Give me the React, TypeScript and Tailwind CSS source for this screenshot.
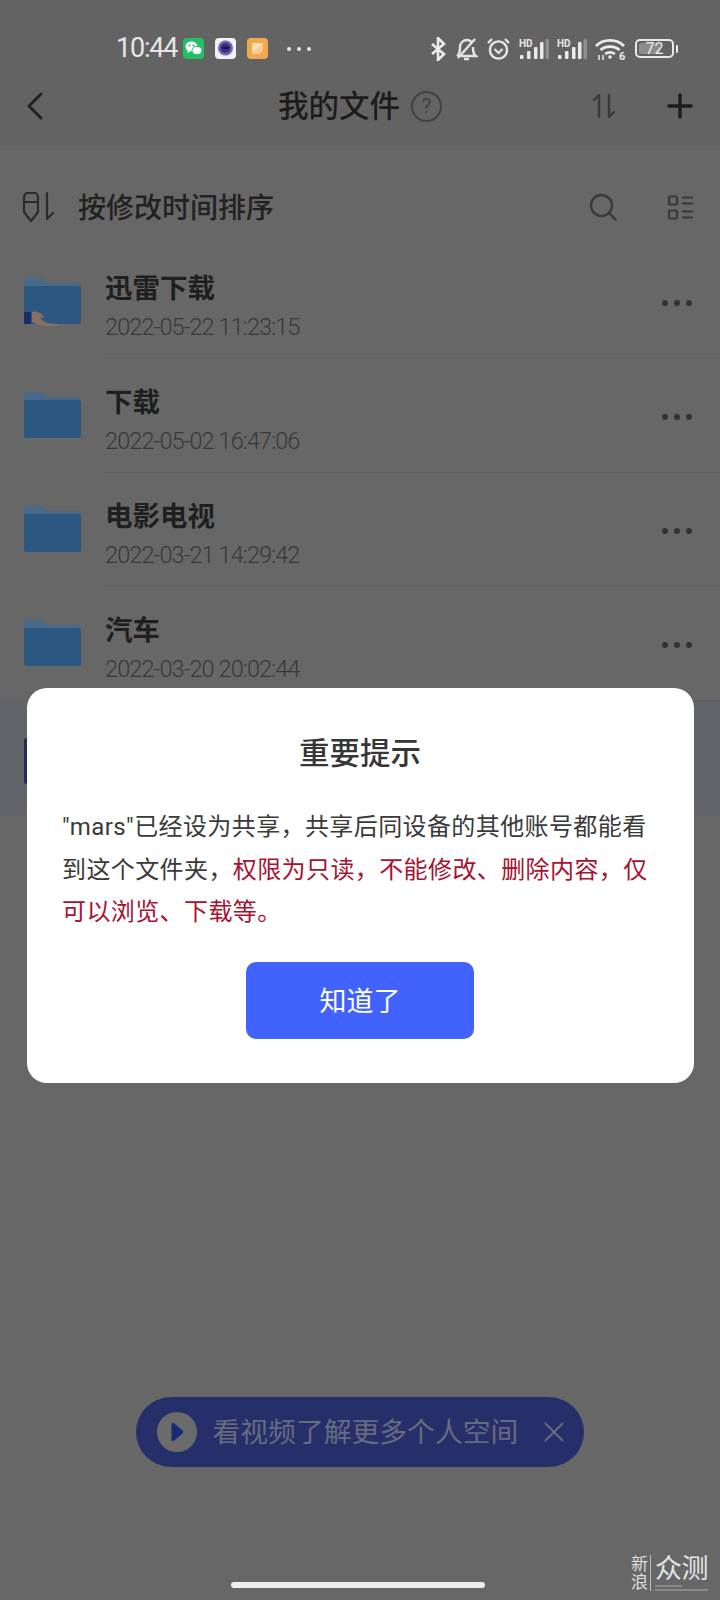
import React from "react";

const Folder = ({ hand = false, navy = false }: { hand?: boolean; navy?: boolean }) => (
  <svg width="57" height="48" viewBox="0 0 57 48" className="shrink-0 overflow-visible">
    <path d="M0 4a3 3 0 0 1 3-3h14a3 3 0 0 1 3 2l2 3h32a3 3 0 0 1 3 3v6H0z" fill={navy ? "#1f2f5c" : "#49698a"} />
    <path d="M0 9h54a3 3 0 0 1 3 3v33a2 2 0 0 1-2 2H2a2 2 0 0 1-2-2z" fill={navy ? "#1f2f5c" : "#2c5780"} />
    {hand && (
      <g>
        <rect x="0" y="35" width="7" height="12" fill="#1b2c66" />
        <path d="M8 35c4-1 7 0 9 2l3 3c-2 1-3 1-4 0 1 3 4 5 8 6 3 .5 8 1 12 2-6 1.500-14 1.500-20 0-3-1-6-2-8-3z" fill="#8a6f5e" />
      </g>
    )}
  </svg>
);

const Dots = () => (
  <div className="flex gap-[6px] shrink-0">
    <span className="w-[6px] h-[6px] rounded-full bg-[#333333]" />
    <span className="w-[6px] h-[6px] rounded-full bg-[#333333]" />
    <span className="w-[6px] h-[6px] rounded-full bg-[#333333]" />
  </div>
);

const Row = ({ name, date, hand }: { name: string; date: string; hand?: boolean }) => (
  <div className="flex h-[114px] pl-[24px]">
    <div className="pt-[32px] w-[81px] shrink-0">
      <Folder hand={hand} />
    </div>
    <div className="flex-1 flex justify-between border-b border-[#606060] pr-[28px]">
      <div className="pt-[26px]">
        <div className="text-[27.5px] leading-[36px] font-bold text-[#1f1f1f]">{name}</div>
        <div className="mt-[5px] text-[23.5px] leading-[30px] font-light tracking-[-0.9px] text-[#383838]">{date}</div>
      </div>
      <div className="pt-[55px]">
        <Dots />
      </div>
    </div>
  </div>
);

const Signal = () => (
  <svg width="30" height="22" viewBox="0 0 30 22">
    <text x="0" y="8.5" fontSize="10" fontWeight="700" fill="#e8e8e8" fontFamily="Roboto">HD</text>
    <rect x="1" y="17" width="3.5" height="4" rx="1" fill="#eaeaea" />
    <rect x="8" y="13" width="3.5" height="8" rx="1" fill="#eaeaea" />
    <rect x="15" y="9" width="3.5" height="12" rx="1" fill="#eaeaea" />
    <rect x="21" y="4" width="3.5" height="17" rx="1" fill="#eaeaea" />
    <rect x="26.5" y="1" width="3.5" height="20" rx="1" fill="#8e8e8e" />
  </svg>
);

export default function App() {
  return (
    <div className="relative w-[720px] h-[1600px] overflow-hidden bg-[#676767] font-['Roboto','Noto_Sans_CJK_SC',sans-serif]">
      <header className="h-[145px] bg-[#636363] pt-[36px]">
        <div className="flex items-center h-[25px] pl-[116px] pr-[42px]">
          <span className="w-[61px] text-[27px] leading-[25px] tracking-[-1.2px] text-[#e6e6e6] whitespace-nowrap">10:44</span>
          <svg width="21" height="21" viewBox="0 0 21 21" className="ml-[6px]">
            <rect width="21" height="21" rx="4" fill="#22bf66" />
            <ellipse cx="8.5" cy="8.5" rx="6" ry="5" fill="#fff" />
            <path d="M5 12l-1 3 3-1.5z" fill="#fff" />
            <ellipse cx="14" cy="12.5" rx="5" ry="4.2" fill="#fff" stroke="#22bf66" strokeWidth="1" />
            <circle cx="6.5" cy="7.5" r="1" fill="#22bf66" />
            <circle cx="10.5" cy="7.5" r="1" fill="#22bf66" />
          </svg>
          <svg width="21" height="21" viewBox="0 0 21 21" className="ml-[11px]">
            <rect width="21" height="21" rx="4" fill="#f1f0f5" />
            <circle cx="10.5" cy="10" r="7.5" fill="#6f62b2" />
            <circle cx="10.5" cy="10" r="5" fill="#3e2f86" />
            <path d="M6 10c2-2 6-2 9-1-1 2-5 3-9 1z" fill="#1b1b3a" />
          </svg>
          <svg width="21" height="21" viewBox="0 0 21 21" className="ml-[11px]">
            <rect width="21" height="21" rx="4" fill="#f0a94e" />
            <path d="M5 5h11v7l-4 4H5z" fill="#fbdcae" />
            <path d="M16 5v7l-4 4H5z" fill="#f6c98c" />
          </svg>
          <div className="flex gap-[6px] ml-[19px]">
            <span className="w-[4px] h-[4px] rounded-full bg-[#e6e6e6]" />
            <span className="w-[4px] h-[4px] rounded-full bg-[#e6e6e6]" />
            <span className="w-[4px] h-[4px] rounded-full bg-[#e6e6e6]" />
          </div>
          <div className="ml-auto flex items-center gap-2">
            <svg width="17" height="24" viewBox="0 0 17 24" fill="none" stroke="#ececec" strokeWidth="2.6">
              <path d="M2 7l12 10-6 6V1l6 6L2 17" />
            </svg>
            <svg width="23" height="24" viewBox="0 0 23 24" fill="none" stroke="#e4e4e4" strokeWidth="2.4">
              <path d="M2 19c3-2 3-5 3-9 0-4 3-7 7-7 2 0 4 1 5 3M18 10c0 4 0 7 3 9H6" />
              <path d="M3 21L20 2" />
              <path d="M9 22h5" strokeWidth="2.6" />
            </svg>
            <svg width="25" height="24" viewBox="0 0 25 24" fill="none" stroke="#e8e8e8" strokeWidth="2.4">
              <circle cx="12.5" cy="13" r="8.6" />
              <path d="M2 6l4-4M23 6l-4-4" />
              <path d="M8.5 12l4 4 4-4" strokeWidth="2" />
            </svg>
            <Signal />
            <Signal />
            <svg width="32" height="24" viewBox="0 0 32 24" fill="none" stroke="#ececec" strokeWidth="2.6" className="overflow-visible">
              <path d="M1 9c7-7.500 21-7.500 28 0" />
              <path d="M5.500 13c5-4.500 14-4.500 19 0" />
              <path d="M10 17c3-2 7-2 10 0" />
              <circle cx="15" cy="20" r="1.800" fill="#ececec" stroke="none" />
              <path d="M4 18v5M8 18v5" strokeWidth="1.500" />
              <text x="24" y="23" fontSize="11" fontWeight="700" fill="#ececec" stroke="none" fontFamily="Roboto">6</text>
            </svg>
            <div className="flex items-center">
              <div className="relative w-[39px] h-[19px] rounded-[5px] border-2 border-[#e8e8e8] p-[2px]">
                <div className="w-[68%] h-full rounded-[2px] bg-[#8c8c8c]" />
                <span className="absolute inset-0 flex items-center justify-center text-[16px] leading-none text-[#ececec]">72</span>
              </div>
              <span className="ml-[2px] w-[2px] h-[8px] rounded-[1px] bg-[#e8e8e8]" />
            </div>
          </div>
        </div>
        <div className="flex items-center h-[60px] mt-[15px]">
          <div className="w-[130px] pl-[26px]">
            <svg width="18" height="30" viewBox="0 0 18 30" fill="none" stroke="#222222" strokeWidth="3" strokeLinecap="round" strokeLinejoin="round" className="block">
              <path d="M15 3L3 15l12 12" />
            </svg>
          </div>
          <div className="flex-1 flex items-center justify-center gap-[11px]">
            <span className="pt-[2px] text-[30.5px] leading-[40px] font-medium text-[#1c1c1c]">我的文件</span>
            <span className="w-[31px] h-[31px] rounded-full border-2 border-[#414141] flex items-center justify-center text-[21px] leading-none text-[#414141]">?</span>
          </div>
          <div className="w-[130px] pr-[27px] flex items-center justify-between pl-[1px]">
            <svg width="26" height="26" viewBox="0 0 26 26" fill="none" stroke="#3a3a3a" strokeWidth="2.4" strokeLinecap="round" strokeLinejoin="round">
              <path d="M3 7l5-5v22" />
              <path d="M18 2v22l5-5" />
            </svg>
            <svg width="26" height="26" viewBox="0 0 26 26" fill="none" stroke="#1c1c1c" strokeWidth="3.4" strokeLinecap="round">
              <path d="M13 2v22M2 13h22" />
            </svg>
          </div>
        </div>
      </header>

      <div className="flex items-center h-[50px] mt-[37px] mb-[13px] pl-[22px] pr-[27px]">
        <svg width="34" height="32" viewBox="0 0 34 32" fill="none" stroke="#2b2b2b" strokeWidth="2.2" strokeLinecap="round" strokeLinejoin="round" className="shrink-0">
          <path d="M2 6a4 4 0 0 1 4-4h6a4 4 0 0 1 4 4v15l-7 9-7-9z" />
          <path d="M2 11h14" />
          <path d="M25 2v26l6-6" />
        </svg>
        <span className="ml-[22px] pt-[4px] text-[28px] leading-[40px] font-medium text-[#222222]">按修改时间排序</span>
        <svg width="28" height="28" viewBox="0 0 28 28" fill="none" stroke="#3a3a3a" strokeWidth="2.4" strokeLinecap="round" className="ml-auto">
          <circle cx="12.500" cy="12.500" r="10.500" />
          <path d="M20.500 20.500l6 6" />
        </svg>
        <svg width="25" height="25" viewBox="0 0 25 25" fill="none" stroke="#3a3a3a" strokeWidth="2.2" className="ml-[51px]">
          <rect x="1" y="1.500" width="8" height="8" rx="1" />
          <rect x="1" y="15.500" width="8" height="8" rx="1" />
          <path d="M14 2.500h11M14 8.500h11M14 16.500h11M14 22.500h11" />
        </svg>
      </div>

      <Row name="迅雷下载" date="2022-05-22 11:23:15" hand />
      <Row name="下载" date="2022-05-02 16:47:06" />
      <Row name="电影电视" date="2022-03-21 14:29:42" />
      <Row name="汽车" date="2022-03-20 20:02:44" />
      <div className="h-[115px] mt-[-1px] bg-[#62646a] pl-[24px] pt-[37px]">
        <Folder navy />
      </div>

      {/* dialog */}
      <div className="absolute left-[26.500px] top-[688px] w-[667px] rounded-[20px] bg-white px-[35.500px] pt-[46px] pb-[44px]">
        <div className="text-center text-[30.500px] leading-[40px] font-medium text-[#363636]">重要提示</div>
        <p className="mt-[32px] text-[24px] leading-[42.500px] tracking-[0.4px] text-[#3a3a3a]">
          "mars"已经设为共享，共享后同设备的其他账号都能看到这个文件夹，
          <span className="text-[#a8112f]">权限为只读，不能修改、删除内容，仅可以浏览、下载等。</span>
        </p>
        <div className="mt-[28px] ml-[184px] w-[228px] h-[77px] rounded-[10px] bg-[#4262fe] flex items-center justify-center pt-[5px] text-[27px] text-white">
          知道了
        </div>
      </div>

      {/* video pill */}
      <div className="absolute left-[136px] top-[1397px] w-[448px] h-[70px] rounded-full bg-[#272f6b] flex items-center pl-[20.500px]">
        <span className="w-[40px] h-[40px] rounded-full bg-[#6b6b6b] flex items-center justify-center shrink-0">
          <svg width="14" height="20" viewBox="0 0 14 20"><path d="M1.500 2.500c0-1.500 1.500-2 2.500-1.200l8.500 7c1 .8 1 2.400 0 3.200L4 18.700c-1 .8-2.500.3-2.500-1.200z" fill="#1b2a78" /></svg>
        </span>
        <span className="ml-[16px] pt-[2px] text-[27.800px] leading-[40px] text-[#686a7e] whitespace-nowrap">看视频了解更多个人空间</span>
        <svg width="20" height="20" viewBox="0 0 20 20" fill="none" stroke="#6a6c80" strokeWidth="1.800" className="ml-[26px]">
          <path d="M1 1l18 18M19 1L1 19" />
        </svg>
      </div>

      {/* home indicator */}
      <div className="absolute left-[231px] top-[1582px] w-[254px] h-[6px] rounded-full bg-[#eeeeee]" />

      {/* watermark */}
      <div className="absolute left-[631px] top-[1555px] flex items-start">
        <div className="flex flex-col text-[17px] leading-[18px] text-[#dedede]">
          <span>新</span>
          <span>浪</span>
        </div>
        <div className="ml-[2px] w-px h-[36px] bg-[#bdbdbd]" />
        <div className="ml-[4px] flex flex-col">
          <span className="text-[27px] leading-[29px] tracking-[-0.5px] text-[#e4e4e4] whitespace-nowrap">众测</span>
          <span className="mt-[1px] w-[27px] h-[2px] bg-[#8a8a8a]" />
          <span className="mt-[2px] w-[53px] h-[2px] bg-[#8a8a8a]" />
        </div>
      </div>
    </div>
  );
}
